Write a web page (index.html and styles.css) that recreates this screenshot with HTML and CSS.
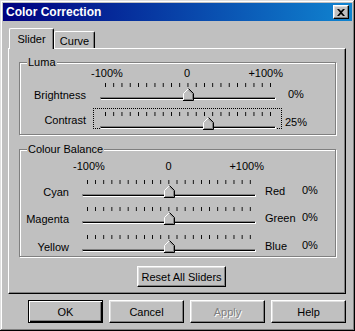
FILE: index.html
```html
<!DOCTYPE html>
<html lang="en">

<head>
    <meta charset="UTF-8">
    <title>Color Correction</title>
    <link rel="stylesheet" href="styles.css">
</head>

<body>
    <svg class="defs" width="0" height="0">
        <symbol id="thumb" viewBox="0 0 11 13">
            <path d="M0.5 12.5V5.5L5.5 0.5L10.5 5.5V12.5Z" fill="#c0c0c0" />
            <path d="M0.5 12V5.5L5.5 0.5" stroke="#fff" fill="none" />
            <path d="M5.5 0.5L10.5 5.5V12.5H0" stroke="#000" fill="none" />
            <path d="M5.5 1.9L9.5 5.9V11.5H1" stroke="#808080" fill="none" />
        </symbol>
    </svg>

    <div class="window">
        <div class="titlebar">
            <span class="title">Color Correction</span>
            <button class="close">
                <svg width="8" height="7" viewBox="0 0 8 7">
                    <path d="M0 0h2l2 2 2-2h2L5 3.5 8 7H6L4 5 2 7H0l3-3.5z" fill="#000" />
                </svg>
            </button>
        </div>

        <div class="content">
            <div class="tabs">
                <div class="tab active">Slider</div>
                <div class="tab">Curve</div>
            </div>

            <div class="panel">
                <fieldset class="group luma">
                    <legend>Luma</legend>
                    <div class="scale"><span>-100%</span><span>0</span><span>+100%</span></div>

                    <div class="row">
                        <span class="label">Brightness</span>
                        <div class="slider">
                            <div class="ticks"></div>
                            <div class="track"></div>
                            <svg class="thumb" style="--p:0.5"><use href="#thumb" /></svg>
                        </div>
                        <span class="value">0%</span>
                    </div>

                    <div class="row contrast">
                        <span class="label">Contrast</span>
                        <div class="focus">
                            <div class="slider">
                                <div class="ticks"></div>
                                <div class="track"></div>
                                <svg class="thumb" style="--p:0.625"><use href="#thumb" /></svg>
                            </div>
                        </div>
                        <span class="value">25%</span>
                    </div>
                </fieldset>

                <fieldset class="group balance">
                    <legend>Colour Balance</legend>
                    <div class="scale"><span>-100%</span><span>0</span><span>+100%</span></div>

                    <div class="row">
                        <span class="label">Cyan</span>
                        <div class="slider">
                            <div class="ticks"></div>
                            <div class="track"></div>
                            <svg class="thumb" style="--p:0.5"><use href="#thumb" /></svg>
                        </div>
                        <span class="channel">Red</span>
                        <span class="value">0%</span>
                    </div>

                    <div class="row">
                        <span class="label">Magenta</span>
                        <div class="slider">
                            <div class="ticks"></div>
                            <div class="track"></div>
                            <svg class="thumb" style="--p:0.5"><use href="#thumb" /></svg>
                        </div>
                        <span class="channel">Green</span>
                        <span class="value">0%</span>
                    </div>

                    <div class="row last">
                        <span class="label">Yellow</span>
                        <div class="slider">
                            <div class="ticks"></div>
                            <div class="track"></div>
                            <svg class="thumb" style="--p:0.5"><use href="#thumb" /></svg>
                        </div>
                        <span class="channel">Blue</span>
                        <span class="value">0%</span>
                    </div>
                </fieldset>

                <button class="btn reset">Reset All Sliders</button>
            </div>

            <div class="actions">
                <button class="btn default">OK</button>
                <button class="btn">Cancel</button>
                <button class="btn disabled">Apply</button>
                <button class="btn">Help</button>
            </div>
        </div>
    </div>
</body>

</html>
```

FILE: styles.css
```css
* {
    box-sizing: border-box;
}

body {
    margin: 0;
    background-color: #c0c0c0;
    font-family: "Liberation Sans", Arial, sans-serif;
    font-size: 11px;
    color: #000;
}

.defs {
    position: absolute;
}

.window {
    width: 355px;
    height: 331px;
    padding: 3px;
    background-color: #c0c0c0;
    box-shadow: inset -1px -1px #000, inset 1px 1px #dfdfdf,
        inset -2px -2px #808080, inset 2px 2px #fff;
}

.titlebar {
    height: 18px;
    display: flex;
    align-items: center;
    justify-content: space-between;
    padding: 0 3px 0 3px;
    background: linear-gradient(to right, #000080, #1084d0);
    color: #fff;
}

.title {
    font-weight: bold;
    font-size: 12px;
}

.close {
    width: 16px;
    height: 14px;
    padding: 0;
    display: flex;
    align-items: center;
    justify-content: center;
    background-color: #c0c0c0;
    border: 1px solid;
    border-color: #fff #000 #000 #fff;
    box-shadow: inset -1px -1px #808080, inset 1px 1px #dfdfdf;
}

.content {
    padding: 7px 0 0 5px;
}

/* tabs */
.tabs {
    display: flex;
    align-items: flex-end;
    height: 20px;
    padding-left: 1px;
}

.tab {
    height: 17px;
    width: 41px;
    padding-top: 3px;
    text-align: center;
    border: 1px solid;
    border-bottom: none;
    border-color: #fff #000 #000 #fff;
    border-radius: 2px 2px 0 0;
    box-shadow: inset -1px 0 #808080;
}

.tab.active {
    height: 21px;
    width: 45px;
    padding-top: 4px;
    margin-bottom: -1px;
    position: relative;
    z-index: 1;
    background-color: #c0c0c0;
}

.panel {
    width: 338px;
    padding: 0 0 6px 10px;
    border: 1px solid;
    border-color: #fff #000 #000 #fff;
    box-shadow: inset -1px -1px #808080;
}

/* group boxes */
.group {
    margin: 7px 0 0 0;
    width: 317px;
    min-width: 0;
    padding: 0;
    border: 1px solid #808080;
    box-shadow: inset 1px 1px #fff, 1px 1px #fff;
}

.group legend {
    margin-left: 7px;
    padding: 0 1px;
    line-height: 12px;
    background-color: #c0c0c0;
}

.luma {
    padding-bottom: 5px;
}

.balance {
    margin-top: 8px;
    padding-top: 6px;
    padding-bottom: 2px;
}

.scale {
    display: grid;
    grid-template-columns: 1fr auto 1fr;
    line-height: 11px;
    width: 192px;
    margin-left: 71px;
}

.balance .scale {
    width: 191px;
    margin-left: 53px;
}

.scale span:last-child {
    justify-self: end;
}

.row {
    display: flex;
    align-items: flex-end;
    margin-top: 4px;
}

.label {
    width: 80px;
    padding-right: 14px;
    text-align: right;
    line-height: 13px;
}

.value {
    padding-left: 12px;
    line-height: 13px;
    margin-bottom: 1px;
}

.balance .row {
    margin-top: 8px;
}

.balance .row:first-of-type {
    margin-top: 6px;
}

.balance .row.last {
    margin-top: 9px;
}

.balance .label {
    width: 62px;
    padding-right: 13px;
}

.channel {
    width: 46px;
    padding-left: 9px;
    line-height: 13px;
    margin-bottom: 1px;
}

.balance .value {
    padding-left: 0;
    margin-bottom: 2px;
}

/* sliders */
.slider {
    position: relative;
    width: 176px;
    height: 19px;
}

.balance .slider {
    width: 174px;
}

.ticks {
    height: 4px;
    margin: 0 5px;
    background-image: linear-gradient(to right, #000 1px, transparent 1px);
    background-size: calc((100% - 1px) / 20) 100%;
    background-repeat: repeat-x;
}

.track {
    margin-top: 10px;
    height: 3px;
    background-color: #000;
    border-top: 1px solid #808080;
    border-bottom: 1px solid #fff;
    border-right: 1px solid #fff;
    border-left: 1px solid #808080;
}

.thumb {
    position: absolute;
    top: 5px;
    left: calc(var(--p) * (100% - 11px));
    width: 11px;
    height: 13px;
}

.contrast {
    margin-top: 6px;
}

.contrast .label {
    width: 73px;
    padding-right: 7px;
    margin-bottom: 2px;
}

.focus {
    border: 1px dotted #000;
    padding: 3px 5px 0 6px;
}

.contrast .slider {
    height: 16px;
}

.contrast .value {
    padding-left: 3px;
    margin-bottom: 0;
}

/* buttons */
.btn {
    height: 23px;
    width: 75px;
    padding: 0;
    font-family: "Liberation Sans", Arial, sans-serif;
    font-size: 11px;
    color: #000;
    background-color: #c0c0c0;
    border: 1px solid;
    border-color: #fff #000 #000 #fff;
    box-shadow: inset -1px -1px #808080, inset 1px 1px #dfdfdf;
}

.btn.default {
    border-color: #000;
    box-shadow: inset 1px 1px #fff, inset -1px -1px #000, inset -2px -2px #808080;
}

.btn.disabled {
    color: #808080;
    text-shadow: 1px 1px #fff;
}

.reset {
    width: 89px;
    height: 21px;
    margin: 9px 0 0 118px;
}

.actions {
    display: flex;
    gap: 6px;
    margin-top: 6px;
    padding-left: 20px;
}
```
